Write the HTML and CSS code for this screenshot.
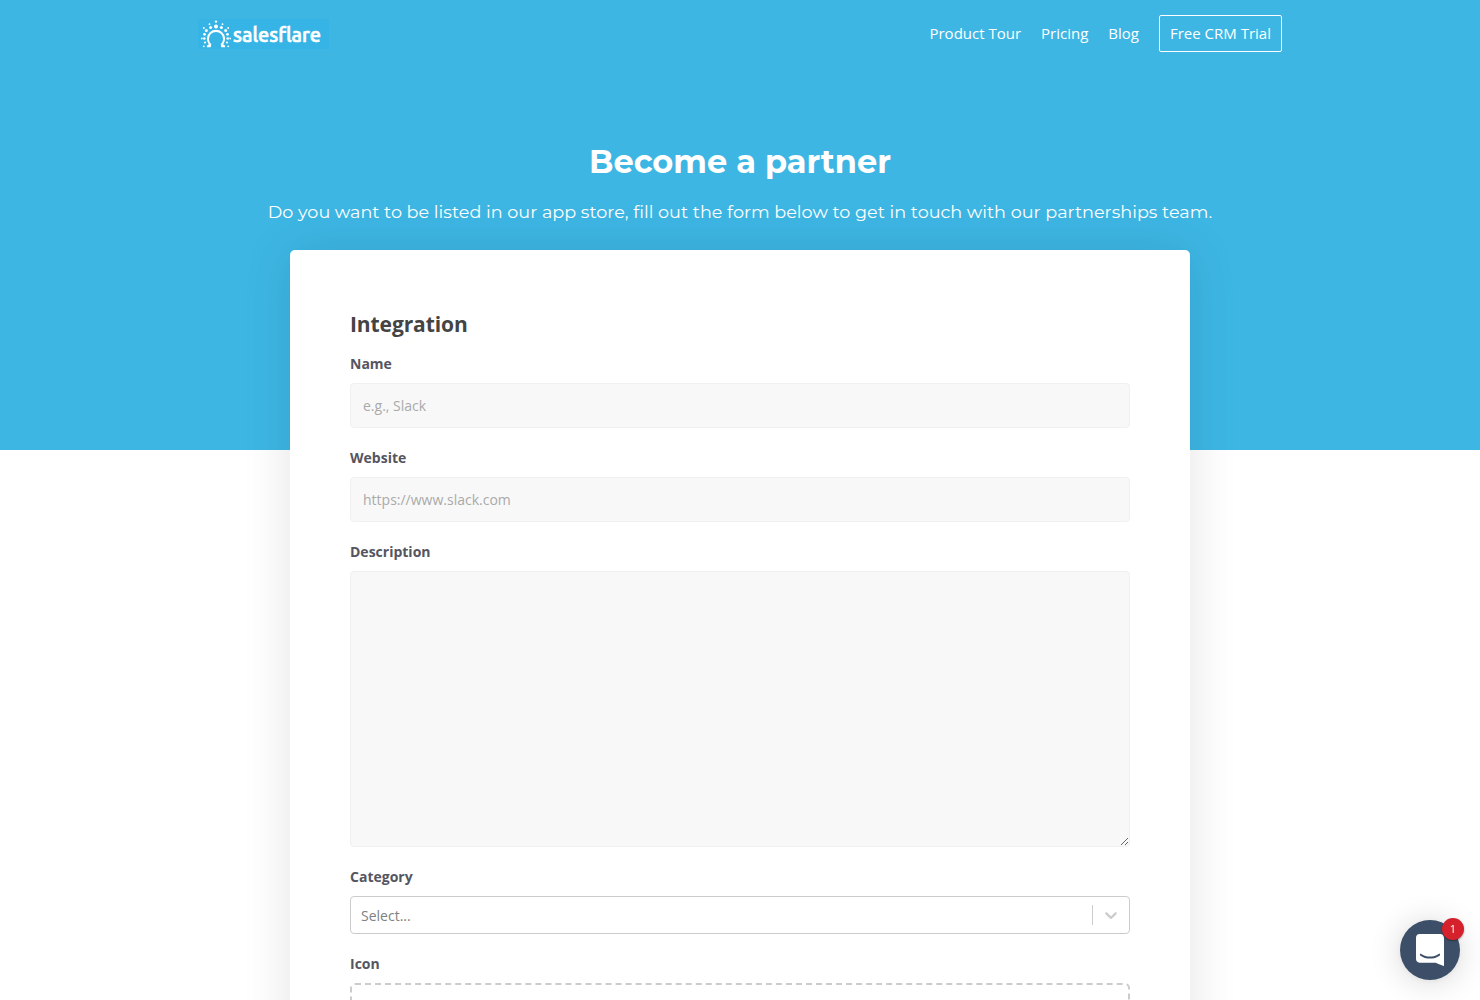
FILE: index.html
```html
<!DOCTYPE html>
<html lang="en">
<head>
    <meta charset="UTF-8">
    <meta name="viewport" content="width=device-width, initial-scale=1.0">
    <title>Become a partner - Salesflare</title>
    <link rel="stylesheet" href="styles.css">
</head>
<body>
    <div class="hero">
        <header class="navbar">
            <a class="logo" href="#">
                <svg width="131" height="30" viewBox="0 0 131 30" fill="#fff">
                    <path d="M8.8 28.2L12.7 28.2L13.3 25.3A7.1 7.1 0 1 1 22.7 25.3L23.3 28.2L27.2 28.2L27 26.6L25.2 25.4A9.1 9.1 0 1 0 10.8 25.4L9 26.6Z"/>
                    <circle cx="18" cy="7.4" r="2"/>
                    <circle cx="18" cy="2.6" r="1.2"/>
                    <circle cx="12.6" cy="8.5" r="1.5"/>
                    <circle cx="23.4" cy="8.5" r="1.5"/>
                    <circle cx="11.5" cy="5.2" r=".9"/>
                    <circle cx="24.5" cy="5.2" r=".9"/>
                    <circle cx="8.3" cy="11.5" r="1.5"/>
                    <circle cx="27.7" cy="11.5" r="1.5"/>
                    <circle cx="5.8" cy="9" r=".9"/>
                    <circle cx="30.2" cy="9" r=".9"/>
                    <circle cx="6.5" cy="15.3" r="1.4"/>
                    <circle cx="29.5" cy="15.3" r="1.4"/>
                    <circle cx="6.3" cy="19.5" r="1.3"/>
                    <circle cx="29.7" cy="19.5" r="1.3"/>
                    <circle cx="3.8" cy="19.5" r=".9"/>
                    <circle cx="32.2" cy="19.5" r=".9"/>
                    <circle cx="7" cy="23.5" r="1.1"/>
                    <circle cx="29" cy="23.5" r="1.1"/>
                    <circle cx="5.8" cy="27.3" r=".9"/>
                    <circle cx="30.2" cy="27.3" r=".9"/>
                    <text class="logo-text" x="35" y="23" textLength="88" lengthAdjust="spacingAndGlyphs">salesflare</text>
                </svg>
            </a>
            <nav class="menu">
                <a href="#">Product Tour</a>
                <a href="#">Pricing</a>
                <a href="#">Blog</a>
                <a class="trial" href="#">Free CRM Trial</a>
            </nav>
        </header>
        <h1>Become a partner</h1>
        <p class="subtitle">Do you want to be listed in our app store, fill out the form below to get in touch with our partnerships team.</p>
    </div>

    <form class="card">
        <h2>Integration</h2>
        <label for="name">Name</label>
        <input type="text" id="name" placeholder="e.g., Slack">

        <label for="website">Website</label>
        <input type="text" id="website" placeholder="https://www.slack.com">

        <label for="description">Description</label>
        <textarea id="description"></textarea>

        <label>Category</label>
        <div class="select">
            <span class="select-value">Select...</span>
            <span class="select-arrow">
                <svg width="20" height="20" viewBox="0 0 20 20" fill="#ccc">
                    <path d="M4.516 7.548c0.436-0.446 1.043-0.481 1.576 0l3.908 3.747 3.908-3.747c0.533-0.481 1.141-0.446 1.574 0 0.436 0.445 0.408 1.197 0 1.615-0.406 0.418-4.695 4.502-4.695 4.502-0.217 0.223-0.502 0.335-0.787 0.335s-0.57-0.112-0.789-0.335c0 0-4.287-4.084-4.695-4.502s-0.436-1.17 0-1.615z"/>
                </svg>
            </span>
        </div>

        <label>Icon</label>
        <div class="dropzone"></div>
    </form>

    <div class="messenger">
        <svg width="28" height="32" viewBox="0 0 28 32" fill="#fff">
            <path d="M28 32s-4.714-1.855-8.527-3.34H3.437C1.54 28.66 0 27.026 0 25.013V3.644C0 1.633 1.54 0 3.437 0h21.125c1.898 0 3.437 1.632 3.437 3.645v18.404H28V32zm-4.139-11.982a.88.88 0 00-1.292-.105c-.03.026-3.015 2.681-8.57 2.681-5.486 0-8.517-2.636-8.571-2.684a.88.88 0 00-1.29.107 1.01 1.01 0 00-.219.708.992.992 0 00.318.664c.142.128 3.537 3.15 9.762 3.15 6.226 0 9.621-3.022 9.763-3.15a.992.992 0 00.317-.664 1.01 1.01 0 00-.218-.707z"/>
        </svg>
        <span class="badge">1</span>
    </div>
</body>
</html>
```
FILE: styles.css
```css
* {
    box-sizing: border-box;
}
body {
    font-family: "Open Sans", sans-serif;
    font-size: 14px;
    background-color: #fff;
    margin: 0;
    height: 100vh;
    overflow: hidden;
}
.hero {
    height: 450px;
    background-color: #3db6e4;
    color: #fff;
    text-align: center;
}
.navbar {
    display: flex;
    justify-content: space-between;
    align-items: center;
    width: 1084px;
    height: 67px;
    margin: 0 auto;
}
.logo {
    display: block;
    height: 30px;
    background-color: #36b4e5;
}
.logo svg {
    display: block;
    overflow: visible;
}
.logo-text {
    font-family: Ubuntu, "Noto Sans", sans-serif;
    font-size: 21px;
    font-weight: 500;
    stroke: #fff;
    stroke-width: 0.7px;
}
.menu {
    display: flex;
    align-items: center;
    gap: 20px;
}
.menu a {
    color: #fff;
    font-size: 15px;
    line-height: 35px;
    text-decoration: none;
}
.menu .trial {
    border: 1px solid #fff;
    border-radius: 2px;
    padding: 0 10px;
}
h1 {
    font-family: Montserrat, sans-serif;
    font-size: 32px;
    font-weight: 700;
    line-height: 40px;
    margin: 75px 0 0;
}
.subtitle {
    font-family: Montserrat, sans-serif;
    font-size: 17.6px;
    font-weight: 400;
    font-variant-ligatures: none;
    line-height: 28px;
    letter-spacing: 0.02px;
    white-space: nowrap;
    margin: 16px 0 0;
}
.card {
    position: relative;
    width: 900px;
    margin: -200px auto 0;
    padding: 60px;
    background-color: #fff;
    border-radius: 5px;
    box-shadow: 0 0 50px rgba(0, 0, 0, 0.11);
}
h2 {
    color: #444;
    font-size: 21px;
    font-weight: 700;
    line-height: 28px;
    letter-spacing: -0.1px;
    margin: 0 0 16px;
}
label {
    display: block;
    color: #55555f;
    font-weight: 700;
    line-height: 20px;
    margin-bottom: 9px;
}
input, textarea {
    display: block;
    width: 100%;
    height: 45px;
    padding: 0 12px;
    margin-bottom: 20px;
    font-family: inherit;
    font-size: 14px;
    background-color: #f8f8f8;
    border: 1px solid #f0f0f0;
    border-radius: 4px;
}
textarea {
    height: 276px;
}
input::placeholder {
    color: #aaa;
}
.select {
    display: flex;
    align-items: center;
    height: 38px;
    margin-bottom: 20px;
    border: 1px solid #ccc;
    border-radius: 4px;
}
.select-value {
    flex: 1;
    padding-left: 10px;
    color: #808080;
}
.select-arrow {
    display: flex;
    height: 20px;
    padding: 0 8px;
    border-left: 1px solid #ccc;
}
.dropzone {
    height: 150px;
    border: 2px dashed #ccc;
    border-radius: 5px;
}
.messenger {
    position: fixed;
    right: 20px;
    bottom: 20px;
    display: flex;
    align-items: center;
    justify-content: center;
    width: 60px;
    height: 60px;
    background-color: #3d4f68;
    border-radius: 50%;
    box-shadow: 0 1px 6px rgba(0, 0, 0, 0.06), 0 2px 32px rgba(0, 0, 0, 0.16);
}
.badge {
    position: absolute;
    top: -2px;
    right: -4px;
    width: 22px;
    height: 22px;
    color: #fff;
    font-size: 11px;
    line-height: 21px;
    text-align: center;
    background-color: #d5212b;
    border-radius: 50%;
    box-shadow: 0 1px 2px rgba(0, 0, 0, 0.4);
}
```
